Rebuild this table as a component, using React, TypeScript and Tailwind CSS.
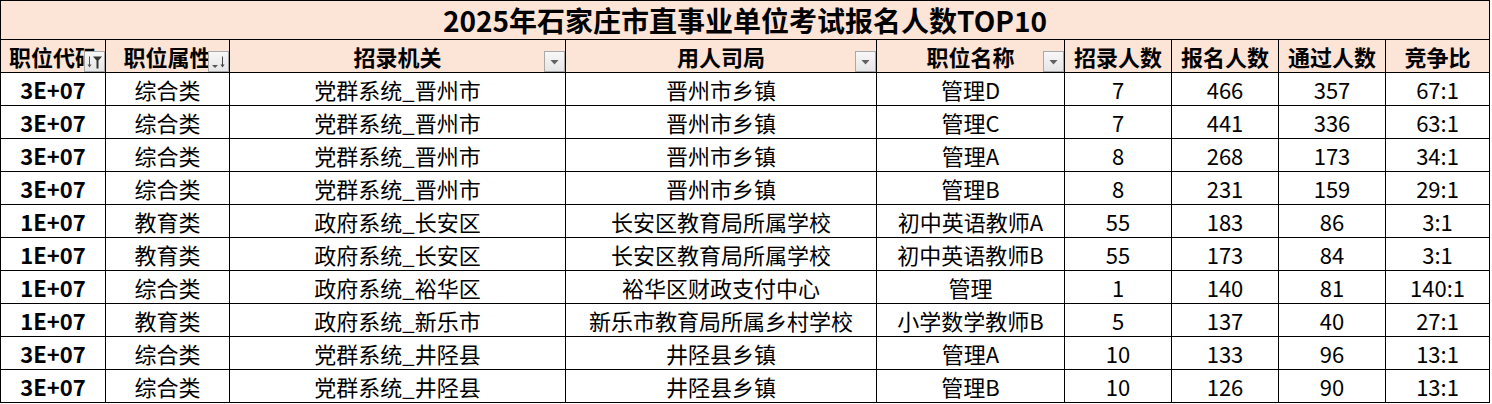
type BtnKind = "dropdown" | "sortFilter" | "sorted" | null;

interface Column {
  label: string;
  width: string;
  btn: BtnKind;
}

const columns: Column[] = [
  { label: "职位代码", width: "w-[105px]", btn: "sortFilter" },
  { label: "职位属性", width: "w-[124px]", btn: "sorted" },
  { label: "招录机关", width: "w-[336px]", btn: "dropdown" },
  { label: "用人司局", width: "w-[311px]", btn: "dropdown" },
  { label: "职位名称", width: "w-[188px]", btn: "dropdown" },
  { label: "招录人数", width: "w-[107px]", btn: null },
  { label: "报名人数", width: "w-[107px]", btn: null },
  { label: "通过人数", width: "w-[107px]", btn: null },
  { label: "竞争比", width: "w-[104px]", btn: null },
];

const rows: string[][] = [
  ["3E+07", "综合类", "党群系统_晋州市", "晋州市乡镇", "管理D", "7", "466", "357", "67:1"],
  ["3E+07", "综合类", "党群系统_晋州市", "晋州市乡镇", "管理C", "7", "441", "336", "63:1"],
  ["3E+07", "综合类", "党群系统_晋州市", "晋州市乡镇", "管理A", "8", "268", "173", "34:1"],
  ["3E+07", "综合类", "党群系统_晋州市", "晋州市乡镇", "管理B", "8", "231", "159", "29:1"],
  ["1E+07", "教育类", "政府系统_长安区", "长安区教育局所属学校", "初中英语教师A", "55", "183", "86", "3:1"],
  ["1E+07", "教育类", "政府系统_长安区", "长安区教育局所属学校", "初中英语教师B", "55", "173", "84", "3:1"],
  ["1E+07", "综合类", "政府系统_裕华区", "裕华区财政支付中心", "管理", "1", "140", "81", "140:1"],
  ["1E+07", "教育类", "政府系统_新乐市", "新乐市教育局所属乡村学校", "小学数学教师B", "5", "137", "40", "27:1"],
  ["3E+07", "综合类", "党群系统_井陉县", "井陉县乡镇", "管理A", "10", "133", "96", "13:1"],
  ["3E+07", "综合类", "党群系统_井陉县", "井陉县乡镇", "管理B", "10", "126", "90", "13:1"],
];

const font = { fontFamily: '"Noto Sans CJK SC", "Noto Sans", sans-serif' };

// little excel-style autofilter button sitting in the header cell corner
function FilterButton({ kind }: { kind: BtnKind }) {
  if (!kind) return null;
  return (
    <div className="absolute right-0 bottom-0 h-[21px] w-[21px] border border-[#a9a9a9] bg-gradient-to-b from-[#f7f7f7] to-[#e6e6e6]">
      <svg width="19" height="19" viewBox="0 0 19 19" className="block">
        {kind === "dropdown" && <path d="M5.5 8h8l-4 4.5z" fill="#606060" />}
        {kind === "sortFilter" && (
          <>
            <path d="M4.5 4.5v10" stroke="#555" strokeWidth="1" />
            <path d="M2.5 12.5l2 3 2-3z" fill="#555" />
            <path d="M8 4.5h9l-3.5 4v8h-2v-8z" fill="#333" />
          </>
        )}
        {kind === "sorted" && (
          <>
            <path d="M3 13h6l-3 3z" fill="#555" />
            <path d="M13.5 4.5v10" stroke="#444" strokeWidth="1" />
            <path d="M11.5 12.5l2 3 2-3z" fill="#444" />
          </>
        )}
      </svg>
    </div>
  );
}

export default function App() {
  return (
    <div className="bg-white text-black" style={font}>
      <table className="w-[1490px] table-fixed border-collapse">
        <colgroup>
          {columns.map((c) => (
            <col key={c.label} className={c.width} />
          ))}
        </colgroup>
        <thead>
          <tr>
            <th
              colSpan={columns.length}
              className="h-[39px] border border-black bg-[#fce4d6] p-0 text-center text-[28px] font-bold leading-none"
            >
              2025年石家庄市直事业单位考试报名人数TOP10
            </th>
          </tr>
          <tr>
            {columns.map((c) => (
              <th
                key={c.label}
                className="relative h-[33px] overflow-hidden whitespace-nowrap border border-black bg-[#fce4d6] p-0 text-center text-[22px] font-bold leading-none"
              >
                {c.label}
                <FilterButton kind={c.btn} />
              </th>
            ))}
          </tr>
        </thead>
        <tbody>
          {rows.map((r, i) => (
            <tr key={i}>
              {r.map((v, j) => (
                <td
                  key={j}
                  className={`h-[33px] whitespace-nowrap border border-black p-0 text-center text-[22px] leading-none ${
                    j === 0 ? "font-bold" : ""
                  }`}
                >
                  {v}
                </td>
              ))}
            </tr>
          ))}
        </tbody>
      </table>
    </div>
  );
}
